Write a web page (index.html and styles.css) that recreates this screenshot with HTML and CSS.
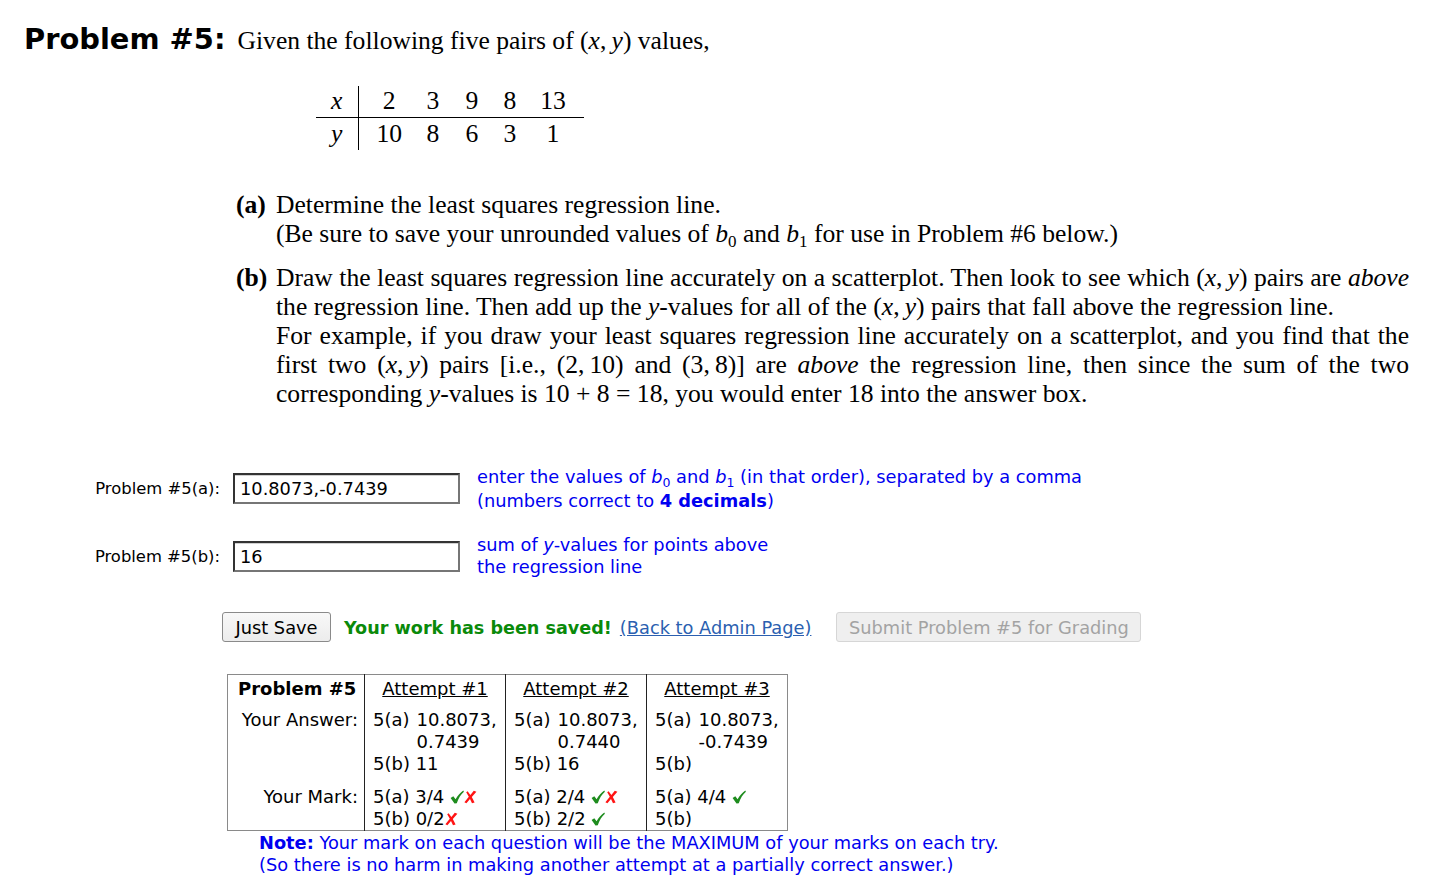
FILE: index.html
```html
<!DOCTYPE html>
<html>
<head>
<meta charset="utf-8">
<title>Problem #5</title>
<link rel="stylesheet" href="styles.css">
</head>
<body>
<div class="page">
  <div class="title">
    <span class="pnum">Problem #5:</span>
    <span class="intro">Given the following five pairs of (<i>x</i>,&thinsp;<i>y</i>) values,</span>
  </div>

  <table class="data">
    <colgroup><col class="w1"><col class="w2"><col class="w3"><col class="w4"><col class="w5"><col class="w6"></colgroup>
    <tr class="r1"><td class="lab"><i>x</i></td><td>2</td><td>3</td><td>9</td><td>8</td><td>13</td></tr>
    <tr class="r2"><td class="lab"><i>y</i></td><td>10</td><td>8</td><td>6</td><td>3</td><td>1</td></tr>
  </table>

  <div class="parts">
    <div class="part">
      <span class="plabel">(a)</span>
      <div class="ptext">
        <div>Determine the least squares regression line.</div>
        <div>(Be sure to save your unrounded values of <i>b</i><sub>0</sub> and <i>b</i><sub>1</sub> for use in Problem #6 below.)</div>
      </div>
    </div>
    <div class="part pb">
      <span class="plabel">(b)</span>
      <div class="ptext">
        <div class="j">Draw the least squares regression line accurately on a scatterplot. Then look to see which (<i>x</i>,&thinsp;<i>y</i>) pairs are <i>above</i></div>
        <div>the regression line. Then add up the <i>y</i>-values for all of the (<i>x</i>,&thinsp;<i>y</i>) pairs that fall above the regression line.</div>
        <div class="j">For example, if you draw your least squares regression line accurately on a scatterplot, and you find that the</div>
        <div class="j">first two (<i>x</i>,&thinsp;<i>y</i>) pairs [i.e., (2,&thinsp;10) and (3,&thinsp;8)] are <i>above</i> the regression line, then since the sum of the two</div>
        <div>corresponding <i>y</i>-values is 10 + 8 = 18, you would enter 18 into the answer box.</div>
      </div>
    </div>
  </div>

  <div class="answers">
    <div class="arow ra">
      <label class="alabel" for="a5a">Problem #5(a):</label>
      <input class="abox" id="a5a" type="text" value="10.8073,-0.7439">
      <div class="help">
        <div class="hl1">enter the values of <i>b</i><sub>0</sub> and <i>b</i><sub>1</sub> (in that order), separated by a comma</div>
        <div>(numbers correct to <b>4 decimals</b>)</div>
      </div>
    </div>
    <div class="arow rb">
      <label class="alabel" for="a5b">Problem #5(b):</label>
      <input class="abox" id="a5b" type="text" value="16">
      <div class="help">
        <div>sum of <i>y</i>-values for points above</div>
        <div>the regression line</div>
      </div>
    </div>
  </div>

  <div class="actions">
    <button class="btn save">Just Save</button>
    <span class="saved">Your work has been saved!</span>
    <a class="back" href="#">(Back to Admin Page)</a>
    <button class="btn disabled" disabled>Submit Problem #5 for Grading</button>
  </div>

  <table class="results">
    <colgroup><col class="k0"><col class="k1"><col class="k1"><col class="k1"></colgroup>
    <tr class="hdr">
      <th class="first">Problem #5</th>
      <th><u>Attempt #1</u></th>
      <th><u>Attempt #2</u></th>
      <th><u>Attempt #3</u></th>
    </tr>
    <tr class="ans">
      <td class="rl">Your Answer:</td>
      <td><div class="ent"><span>5(a)</span><span>10.8073,<br>0.7439</span></div><div>5(b) 11</div></td>
      <td><div class="ent"><span>5(a)</span><span>10.8073,<br>0.7440</span></div><div>5(b) 16</div></td>
      <td><div class="ent"><span>5(a)</span><span>10.8073,<br>-0.7439</span></div><div>5(b)</div></td>
    </tr>
    <tr class="mk">
      <td class="rl">Your Mark:</td>
      <td>
        <div>5(a) 3/4 <svg class="ic ok" viewBox="0 0 14 14"><path d="M0.6 8 L3.3 6.2 L5.6 9.2 C7.8 5.4 10.4 2.4 13.3 0.5 L13.9 1.8 C10.9 4.4 8.4 8.2 6.8 13.2 L4.5 13.4 Z"/></svg><svg class="ic no" viewBox="0 0 14 14"><path d="M3.6 1.2 L6.4 5 L9.8 0.8 L12.4 1.8 L7.8 7 L10.6 12.4 L8 13.2 L6 9 L2.4 13.2 L0.4 12.2 L4.8 6.8 L2.2 2.2 Z"/></svg></div>
        <div>5(b) 0/2<svg class="ic no" viewBox="0 0 14 14"><path d="M3.6 1.2 L6.4 5 L9.8 0.8 L12.4 1.8 L7.8 7 L10.6 12.4 L8 13.2 L6 9 L2.4 13.2 L0.4 12.2 L4.8 6.8 L2.2 2.2 Z"/></svg></div>
      </td>
      <td>
        <div>5(a) 2/4 <svg class="ic ok" viewBox="0 0 14 14"><path d="M0.6 8 L3.3 6.2 L5.6 9.2 C7.8 5.4 10.4 2.4 13.3 0.5 L13.9 1.8 C10.9 4.4 8.4 8.2 6.8 13.2 L4.5 13.4 Z"/></svg><svg class="ic no" viewBox="0 0 14 14"><path d="M3.6 1.2 L6.4 5 L9.8 0.8 L12.4 1.8 L7.8 7 L10.6 12.4 L8 13.2 L6 9 L2.4 13.2 L0.4 12.2 L4.8 6.8 L2.2 2.2 Z"/></svg></div>
        <div>5(b) 2/2 <svg class="ic ok" viewBox="0 0 14 14"><path d="M0.6 8 L3.3 6.2 L5.6 9.2 C7.8 5.4 10.4 2.4 13.3 0.5 L13.9 1.8 C10.9 4.4 8.4 8.2 6.8 13.2 L4.5 13.4 Z"/></svg></div>
      </td>
      <td>
        <div>5(a) 4/4 <svg class="ic ok" viewBox="0 0 14 14"><path d="M0.6 8 L3.3 6.2 L5.6 9.2 C7.8 5.4 10.4 2.4 13.3 0.5 L13.9 1.8 C10.9 4.4 8.4 8.2 6.8 13.2 L4.5 13.4 Z"/></svg></div>
        <div>5(b)</div>
      </td>
    </tr>
  </table>

  <div class="note">
    <div><b>Note:</b> Your mark on each question will be the MAXIMUM of your marks on each try.</div>
    <div>(So there is no harm in making another attempt at a partially correct answer.)</div>
  </div>
</div>
</body>
</html>
```

FILE: styles.css
```css
html, body {
  margin: 0;
  padding: 0;
  background: #ffffff;
  color: #000000;
}

body {
  font-family: "DejaVu Sans", Verdana, sans-serif;
  font-size: 17.8px;
}

.page {
  width: 1432px;
}

/* ---------- title ---------- */
.title {
  display: flex;
  align-items: baseline;
  padding: 22px 0 0 24px;
  line-height: 34px;
}

.pnum {
  font-family: "DejaVu Sans", Verdana, sans-serif;
  font-weight: bold;
  font-size: 28.9px;
  margin-right: 12px;
}

.intro {
  font-family: "Liberation Serif", "Times New Roman", serif;
  font-size: 25.6px;
}

/* ---------- data table ---------- */
.data {
  margin: 28px 0 0 316px;
  border-collapse: collapse;
  table-layout: fixed;
  width: 268px;
  font-family: "Liberation Serif", "Times New Roman", serif;
  font-size: 25.6px;
}

.data td {
  padding: 0;
  text-align: center;
  vertical-align: middle;
}

.data .w1 { width: 42px; }
.data .w2 { width: 62px; }
.data .w3 { width: 26px; }
.data .w4 { width: 52px; }
.data .w5 { width: 24px; }
.data .w6 { width: 62px; }

.data .r1 td { height: 30px; border-bottom: 1px solid #000; padding-bottom: 1px; }
.data .r2 td { height: 32px; }
.data td.lab { border-right: 1px solid #000; }

/* ---------- parts ---------- */
.parts {
  margin: 40px 0 0 236px;
  width: 1173px;
  font-family: "Liberation Serif", "Times New Roman", serif;
  font-size: 25.6px;
  line-height: 29px;
}

.part {
  display: flex;
}

.part.pb {
  margin-top: 15px;
}

.plabel {
  font-weight: bold;
  width: 40px;
  flex: none;
}

.ptext {
  flex: 1;
}

.ptext .j {
  text-align: justify;
  text-align-last: justify;
  word-spacing: -1.5px;
}

.parts sub {
  font-size: 17px;
  line-height: 0;
  vertical-align: -5px;
}

/* ---------- answer rows ---------- */
.answers {
  margin-top: 56px;
}

.arow {
  display: flex;
  align-items: center;
}

.arow.rb {
  margin-top: 22px;
}

.alabel {
  width: 145px;
  margin-left: 75px;
  text-align: right;
  font-size: 16.4px;
  padding-top: 1px;
}

.abox {
  box-sizing: border-box;
  width: 227px;
  height: 31px;
  margin: 0 0 0 13px;
  padding: 0 5px;
  font-family: "DejaVu Sans", Verdana, sans-serif;
  font-size: 17.8px;
  color: #000;
  background: #fff;
  border-style: solid;
  border-width: 2px;
  border-color: #333333 #767676 #767676 #333333;
  box-shadow: inset 0 1px 0 #d0d0d0;
  outline: none;
}

.help {
  margin-left: 17px;
  color: #0000f0;
  font-size: 17.8px;
  line-height: 22px;
}

.help .hl1 {
  line-height: 26px;
}

.help sub {
  font-size: 12.5px;
  line-height: 0;
  vertical-align: -4px;
}

/* ---------- actions ---------- */
.actions {
  display: flex;
  align-items: center;
  margin: 34px 0 0 222px;
  height: 30px;
}

.btn {
  box-sizing: border-box;
  height: 30px;
  padding: 0 12px;
  font-family: "DejaVu Sans", Verdana, sans-serif;
  font-size: 17.8px;
  color: #000;
  background: linear-gradient(#f8f8f8, #ececec);
  border: 1px solid #8a8a8a;
  border-radius: 3px;
}

.btn.save {
  width: 109px;
  padding: 0;
}

.btn.disabled {
  margin-left: 25px;
  width: 305px;
  padding: 0;
  color: #a3a3a3;
  background: #efefef;
  border-color: #d6d6d6;
}

.saved {
  margin-left: 13px;
  color: #0a8a0a;
  font-weight: bold;
  font-size: 17.6px;
  padding-top: 1px;
}

.back {
  margin-left: 8px;
  color: #2b5fb0;
  font-size: 17.8px;
  text-decoration: underline;
  padding-top: 1px;
}

/* ---------- results ---------- */
.results {
  margin: 32px 0 0 227px;
  border-collapse: collapse;
  table-layout: fixed;
  width: 561px;
  border: 1px solid #8a8a8a;
  font-size: 18px;
  line-height: 22px;
}

.results .k0 { width: 137px; }
.results .k1 { width: 141px; }

.results th,
.results td {
  padding: 0 8px;
  vertical-align: top;
  border-left: 1px solid #222;
  text-align: left;
  white-space: nowrap;
}

.results th:first-child,
.results td:first-child {
  border-left: 1px solid #8a8a8a;
}

.results th {
  font-weight: normal;
  text-align: center;
  padding-top: 3px;
  padding-bottom: 9px;
}

.results th.first {
  font-weight: bold;
  text-align: left;
  padding-left: 10px;
}

.results td.rl {
  text-align: right;
  padding-right: 6px;
}

.results .ans td {
  padding-bottom: 5px;
}

.results .mk td {
  padding-top: 6px;
  padding-bottom: 0;
}

.ent {
  display: flex;
}

.ent span:first-child {
  margin-right: 7px;
}

.ic {
  width: 14px;
  height: 14px;
  vertical-align: -1px;
}

.ic.ok { fill: #1e8c1e; }
.ic.no { fill: #ff1414; }

/* ---------- note ---------- */
.note {
  margin: 1px 0 0 259px;
  color: #0000f0;
  font-size: 17.8px;
  line-height: 22px;
}
```
